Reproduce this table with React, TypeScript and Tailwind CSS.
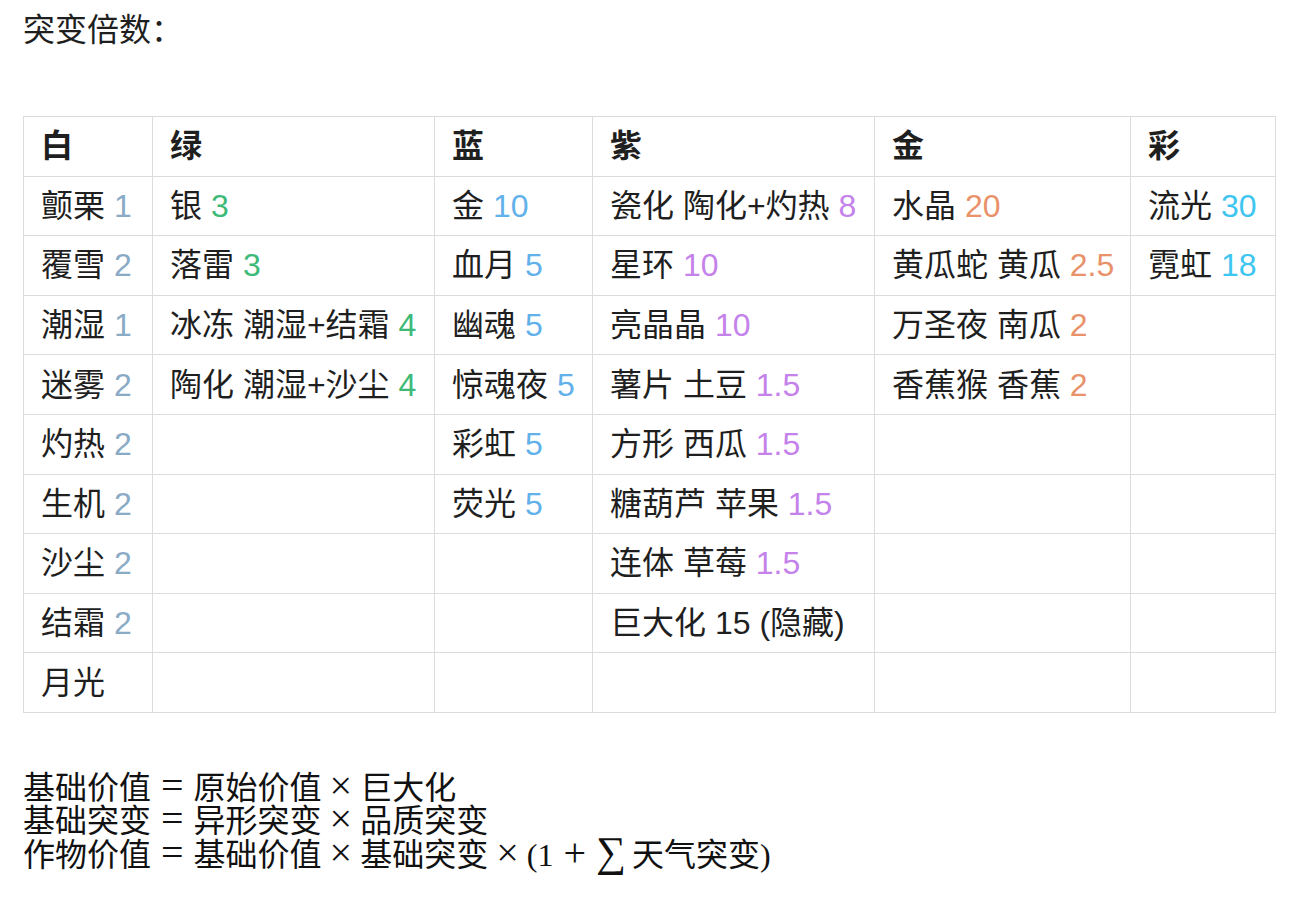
import React from 'react';

type Item = { name: string; value?: string };

const SANS = "font-['Liberation_Sans','Noto_Sans_CJK_SC',sans-serif]";
const SERIF = "font-['Liberation_Serif','DejaVu_Serif','Noto_Sans_CJK_SC',serif]";

const columns: { title: string; width: string; color: string; items: Item[] }[] = [
  {
    title: '白',
    width: 'w-[129px]',
    color: 'text-[#8aabc6]',
    items: [
      { name: '颤栗', value: '1' },
      { name: '覆雪', value: '2' },
      { name: '潮湿', value: '1' },
      { name: '迷雾', value: '2' },
      { name: '灼热', value: '2' },
      { name: '生机', value: '2' },
      { name: '沙尘', value: '2' },
      { name: '结霜', value: '2' },
      { name: '月光' },
    ],
  },
  {
    title: '绿',
    width: 'w-[282px]',
    color: 'text-[#3dba78]',
    items: [
      { name: '银', value: '3' },
      { name: '落雷', value: '3' },
      { name: '冰冻 潮湿+结霜', value: '4' },
      { name: '陶化 潮湿+沙尘', value: '4' },
    ],
  },
  {
    title: '蓝',
    width: 'w-[158px]',
    color: 'text-[#62b1ea]',
    items: [
      { name: '金', value: '10' },
      { name: '血月', value: '5' },
      { name: '幽魂', value: '5' },
      { name: '惊魂夜', value: '5' },
      { name: '彩虹', value: '5' },
      { name: '荧光', value: '5' },
    ],
  },
  {
    title: '紫',
    width: 'w-[282px]',
    color: 'text-[#c482ea]',
    items: [
      { name: '瓷化 陶化+灼热', value: '8' },
      { name: '星环', value: '10' },
      { name: '亮晶晶', value: '10' },
      { name: '薯片 土豆', value: '1.5' },
      { name: '方形 西瓜', value: '1.5' },
      { name: '糖葫芦 苹果', value: '1.5' },
      { name: '连体 草莓', value: '1.5' },
      { name: '巨大化 15 (隐藏)' },
    ],
  },
  {
    title: '金',
    width: 'w-[256px]',
    color: 'text-[#e9926a]',
    items: [
      { name: '水晶', value: '20' },
      { name: '黄瓜蛇 黄瓜', value: '2.5' },
      { name: '万圣夜 南瓜', value: '2' },
      { name: '香蕉猴 香蕉', value: '2' },
    ],
  },
  {
    title: '彩',
    width: 'w-[145px]',
    color: 'text-[#3ec6f0]',
    items: [
      { name: '流光', value: '30' },
      { name: '霓虹', value: '18' },
    ],
  },
];

const ROWS = 9;

// math operator, katex-like spacing; zero line-height so the line box keeps its height
const Op = ({ children, wide }: { children: React.ReactNode; wide?: boolean }) => (
  <span className={`text-[40px] leading-[0px] ${wide ? 'mx-[10px]' : 'mx-[8px]'}`}>{children}</span>
);

export default function App() {
  return (
    <div className={`px-[23px] pt-[6px] text-[32px] text-[#1f1f1f] bg-white min-h-[908px] ${SANS}`}>
      <p className="leading-[48px]">突变倍数：</p>

      <table className="mt-[62px] table-fixed border-collapse w-[1252px]">
        <thead>
          <tr>
            {columns.map((c) => (
              <th
                key={c.title}
                className={`${c.width} border border-[#dcdcdc] pl-[17px] pr-2 h-[59.6px] text-left font-bold leading-[48px]`}
              >
                {c.title}
              </th>
            ))}
          </tr>
        </thead>
        <tbody>
          {Array.from({ length: ROWS }).map((_, r) => (
            <tr key={r}>
              {columns.map((c) => {
                const item = c.items[r];
                return (
                  <td
                    key={c.title}
                    className="border border-[#dcdcdc] pl-[17px] pr-2 h-[59.6px] leading-[48px] whitespace-nowrap"
                  >
                    {item && (
                      <>
                        {item.name}
                        {item.value && <span className={c.color}> {item.value}</span>}
                      </>
                    )}
                  </td>
                );
              })}
            </tr>
          ))}
        </tbody>
      </table>

      <div className={`mt-[59px] leading-[33.5px] text-[32px] text-[#111] ${SERIF}`}>
        <div>
          基础价值<Op wide>=</Op>原始价值<Op>×</Op>巨大化
        </div>
        <div>
          基础突变<Op wide>=</Op>异形突变<Op>×</Op>品质突变
        </div>
        <div>
          作物价值<Op wide>=</Op>基础价值<Op>×</Op>基础突变<Op>×</Op>(1<Op wide>+</Op>
          <span className="mr-[6px] text-[42px] leading-[0px]">∑</span>
          天气突变)
        </div>
      </div>
    </div>
  );
}
